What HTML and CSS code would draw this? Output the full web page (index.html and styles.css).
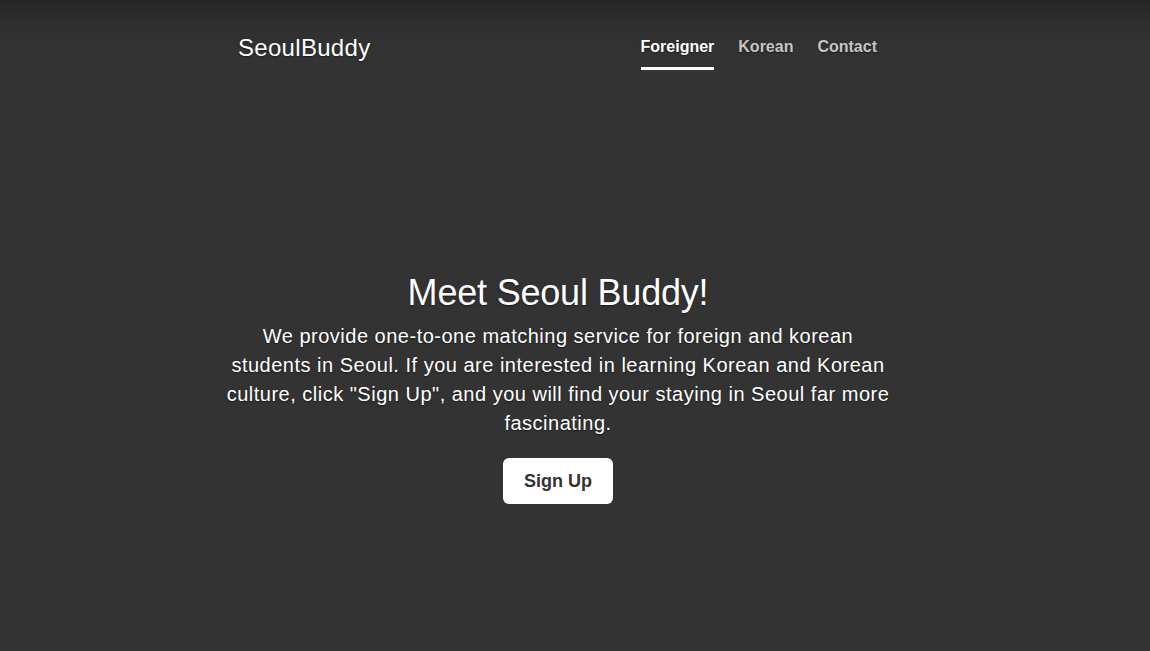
FILE: index.html
```html
<!DOCTYPE html>
<html lang="en">
<head>
<meta charset="utf-8">
<title>SeoulBuddy</title>
<link rel="stylesheet" href="styles.css">
</head>
<body>
<div class="page">
  <div class="cover">
    <header class="masthead">
      <h3 class="brand">SeoulBuddy</h3>
      <nav class="nav">
        <a class="nav-link active" href="#">Foreigner</a>
        <a class="nav-link" href="#">Korean</a>
        <a class="nav-link" href="#">Contact</a>
      </nav>
    </header>
    <main class="inner">
      <h1 class="title">Meet Seoul Buddy!</h1>
      <p class="lead">We provide one-to-one matching service for foreign and korean students in Seoul. If you are interested in learning Korean and Korean culture, click "Sign Up", and you will find your staying in Seoul far more fascinating.</p>
      <a class="btn" href="#">Sign Up</a>
    </main>
  </div>
</div>
</body>
</html>
```

FILE: styles.css
```css
html, body {
  margin: 0;
  height: 100%;
}
body {
  background: linear-gradient(to bottom, #262626 0, #2e2e2e 22px, #333 48px) no-repeat #333;
  color: #fff;
  font-family: "Liberation Sans", Arial, sans-serif;
  text-shadow: 0 0.05rem 0.1rem rgba(0, 0, 0, 0.5);
}
.page {
  display: flex;
  justify-content: center;
  padding-right: 34px;
}
.cover {
  width: 672px;
  display: flex;
  flex-direction: column;
}
.masthead {
  display: flex;
  justify-content: space-between;
  align-items: flex-start;
  margin: 0 16px;
  padding-top: 30px;
}
.brand {
  margin: 0;
  font-size: 24px;
  font-weight: 400;
  line-height: 36px;
  letter-spacing: 0.3px;
}
.nav {
  display: flex;
  gap: 24px;
  padding-top: 5px;
  padding-right: 1px;
}
.nav-link {
  font-size: 16px;
  font-weight: 700;
  line-height: 24px;
  padding-bottom: 8px;
  color: #c6c6c6;
  text-decoration: none;
  border-bottom: 3px solid transparent;
}
.nav-link.active {
  color: #fff;
  border-bottom-color: #fff;
}
.inner {
  display: flex;
  flex-direction: column;
  align-items: center;
  text-align: center;
  padding-top: 201px;
}
.title {
  margin: 0 0 8px;
  font-size: 36px;
  font-weight: 400;
  line-height: 43px;
  letter-spacing: -0.2px;
}
.lead {
  margin: 0 0 20px;
  font-size: 20px;
  line-height: 29px;
  letter-spacing: 0.5px;
}
.btn {
  display: inline-block;
  background: #fff;
  color: #333;
  text-shadow: none;
  font-size: 18px;
  font-weight: 700;
  line-height: 28px;
  padding: 9px 21px;
  border-radius: 6px;
  text-decoration: none;
}
```
